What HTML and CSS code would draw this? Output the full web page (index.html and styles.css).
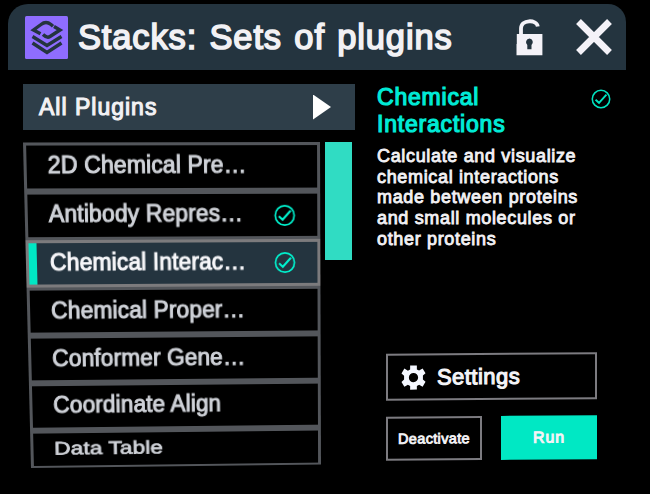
FILE: index.html
```html
<!DOCTYPE html>
<html lang="en">
<head>
<meta charset="utf-8">
<title>Stacks</title>
<link rel="stylesheet" href="styles.css">
</head>
<body>
<svg class="defs" width="0" height="0" aria-hidden="true">
  <symbol id="check" viewBox="0 0 22 22">
    <circle cx="11" cy="11" r="9.6" fill="none" stroke="currentColor" stroke-width="1.7"/>
    <path d="M5 11.800 8.800 15.200 17 6.200" fill="none" stroke="currentColor" stroke-width="2.1"/>
  </symbol>
</svg>
<div class="panel">
  <header class="header">
    <svg class="logo" viewBox="0 0 43 43">
      <rect width="43" height="43" rx="1.5" fill="#8f6dff"/>
      <g fill="none" stroke="#24343f" stroke-width="3.4">
        <path d="M15.500 17.800 8.500 14 16 8.500Q21 4.500 26 8.500L28 10.300"/>
        <path d="M29 10.500 35 14 25 20.500Q22 22.500 18 18.500"/>
        <path d="M7.500 20.500 22 29.500 36.500 20.500"/>
        <path d="M7.500 27 22 36.500 36.500 27"/>
      </g>
    </svg>
    <h1 class="title">Stacks: Sets of plugins</h1>
    <svg class="lock" viewBox="0 0 27 37">
      <path d="M5 16V9.500C5 0.500 20.500 0 21.800 7.500" fill="none" stroke="#f4f2f8" stroke-width="3.800"/>
      <path fill-rule="evenodd" fill="#f4f2f8" d="M.8 15H26.400V36.300H.5V25H.8ZM13.500 19.500a3.700 3.700 0 0 0-2.200 6.500V30.200H15.500V26a3.700 3.700 0 0 0-2-6.500Z"/>
    </svg>
    <svg class="close" viewBox="0 0 36 36"><path d="M2.500 2.500 33.500 33.500M33.500 2.500 2.500 33.500" stroke="#f4f2f8" stroke-width="6.800"/></svg>
  </header>
  <main class="content">
    <section class="browser">
      <div class="filter"><span>All Plugins</span><i class="arrow"></i></div>
      <div class="list-area">
        <ul class="list">
          <li class="row"><span>2D Chemical Pre…</span></li>
          <li class="row"><span>Antibody Repres…</span><svg class="check"><use href="#check"/></svg></li>
          <li class="row selected"><span>Chemical Interac…</span><svg class="check"><use href="#check"/></svg></li>
          <li class="row"><span>Chemical Proper…</span></li>
          <li class="row"><span>Conformer Gene…</span></li>
          <li class="row"><span>Coordinate Align</span></li>
          <li class="row short"><span>Data Table</span></li>
        </ul>
        <div class="scrollbar"></div>
      </div>
    </section>
    <section class="details">
      <div class="heading"><h2>Chemical<br>Interactions</h2><svg class="check small"><use href="#check"/></svg></div>
      <p class="description">Calculate and visualize<br>chemical interactions<br>made between proteins<br>and small molecules or<br>other proteins</p>
      <div class="actions">
        <button class="settings">
          <svg class="gear" viewBox="0 0 26 26"><path fill="#f4f7ff" fill-rule="evenodd" d="M9.500.5h7v4l2.300 1.200L22.500 3.500 25.500 8.500 22.800 11v4L25.500 17.500 22.500 22.500 18.800 20.500 16.500 21.800V25.500h-7V21.800L7.200 20.500 3.500 22.500.5 17.500 3.200 15V11L.5 8.500 3.500 3.500 7.200 5.700 9.500 4.500ZM13 8.200a4.800 4.800 0 1 0 0 9.600 4.800 4.800 0 0 0 0-9.600Z"/></svg>
          <span>Settings</span>
        </button>
        <div class="pair"><button class="deactivate">Deactivate</button><button class="run">Run</button></div>
      </div>
    </section>
  </main>
</div>
</body>
</html>
```
FILE: styles.css
```css
* { box-sizing: border-box; }
body { margin: 0; width: 650px; height: 494px; overflow: hidden; background: #000; color: #f2f1f4; font-family: "Liberation Sans", Arial, sans-serif; }
.defs { position: absolute; }
.panel { padding: 4px 24px 0 8px; }
h1, h2, p, ul { margin: 0; padding: 0; font-weight: 400; }
.header { display: flex; align-items: center; height: 66px; padding: 0 14px 0 17px; border-radius: 20px 18px 0 0; background: #24343f; }
.logo { width: 43px; height: 43px; margin-right: 8px; }
.title { flex: 1; padding-left: 2px; font-size: 34.500px; line-height: 40px; letter-spacing: .85px; word-spacing: 2px; -webkit-text-stroke: 1.6px currentColor; white-space: nowrap; }
.lock { width: 27px; height: 37px; margin-right: 33px; }
.close { width: 36px; height: 36px; }
.content { display: flex; padding: 14px 0 0 15px; }
.browser { width: 332px; }
.filter { display: flex; align-items: center; justify-content: space-between; height: 46px; padding: 0 24px 0 16px; background: #2e3e49; font-size: 23px; letter-spacing: 1px; -webkit-text-stroke: 1.1px currentColor; }
.arrow { width: 18px; height: 25px; background: #fff; clip-path: polygon(0 0, 100% 50%, 0 100%); }
.list-area { display: flex; gap: 5px; padding-top: 12px; }
.list { width: 297px; list-style: none; transform-origin: 0 0; transform: matrix3d(1.009563, -.0016835, 0, .0000322, .025209, 1.025717, 0, .00007417, 0, 0, 1, 0, 0, .5, 0, 1); }
.row { display: flex; align-items: center; justify-content: space-between; height: 47.8px; padding: 0 22px 2px 21px; border: 3px solid #53565b; color: #cfd2d8; font-size: 23px; letter-spacing: .12px; white-space: nowrap; -webkit-text-stroke: 1px currentColor; }
.row.selected { border-color: #7c7b7d; background: #24343f; box-shadow: inset 8px 0 #00e8c4; color: #f7f7fa; }
.row.short { height: 38.200px; padding-bottom: 2px; border-bottom-width: 2px; }
.row.short span { transform: scaleY(.8); }
.check { width: 22px; height: 23px; margin-top: 3px; color: #00f3cf; flex: none; }
.check.small { width: 20px; height: 20px; margin-top: 5px; color: #00e4c0; }
.scrollbar { width: 27px; height: 118px; background: #30dcc3; }
.details { width: 263px; flex: none; padding-left: 22px; }
.heading { display: flex; justify-content: space-between; padding-right: 7px; height: 54px; color: #00ead6; }
h2 { font-size: 23px; line-height: 27px; letter-spacing: .8px; -webkit-text-stroke: 1.2px currentColor; }
.description { margin-top: 8px; font-size: 18px; line-height: 20.700px; letter-spacing: .66px; white-space: nowrap; -webkit-text-stroke: .85px currentColor; }
.actions { margin: 103px 0 0 9px; width: 211px; transform: skewY(-.45deg); }
button { display: flex; align-items: center; justify-content: center; padding: 0; border: 2px solid #7c7b80; background: #000; color: #f4f4f7; font-family: inherit; }
.settings { width: 211px; height: 47px; padding-left: 13px; justify-content: flex-start; font-size: 22px; letter-spacing: .45px; -webkit-text-stroke: 1.1px currentColor; }
.gear { width: 25px; height: 26px; margin-right: 11px; }
.pair { display: flex; justify-content: space-between; margin-top: 16px; }
.deactivate { width: 96px; height: 44px; font-size: 14.500px; letter-spacing: .35px; -webkit-text-stroke: .85px currentColor; }
.run { width: 96px; height: 44px; border: 0; background: #00e8c4; font-size: 16px; letter-spacing: .8px; -webkit-text-stroke: 1px currentColor; }
```
